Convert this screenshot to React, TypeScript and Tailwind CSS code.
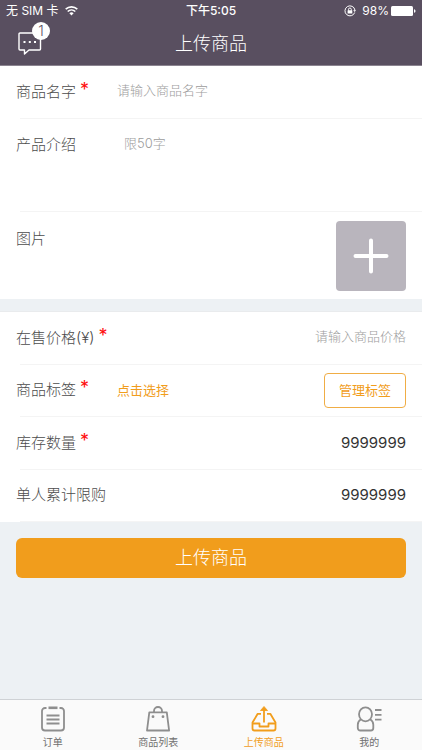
import type { ReactNode } from 'react';

function Required() {
  return <span className="ml-1 text-lg leading-4 font-normal text-[#ff0d0d]" aria-hidden="true">*</span>;
}

function Divider() {
  return <div className="ml-5 h-px bg-[#f4f4f4]" />;
}

type FieldProps = {
  label: string;
  htmlFor?: string;
  required?: boolean;
  children: ReactNode;
};

function Field({ label, htmlFor, required, children }: FieldProps) {
  return (
    <div className="flex flex-col">
      <div className="flex flex-1 items-center px-4">
        <label htmlFor={htmlFor} className="flex shrink-0 items-start text-[15px] leading-5 font-light text-[#4c4c4c]">
          {label}
          {required && <Required />}
        </label>
        {children}
      </div>
      <Divider />
    </div>
  );
}

function StatusBar() {
  return (
    <div className="grid h-5 grid-cols-3 items-center px-1.5 pt-0.5 text-xs leading-4">
      <div className="flex items-center gap-1.5">
        <span>无 SIM 卡</span>
        <svg width="13" height="10" viewBox="0 0 13 10" fill="none" stroke="currentColor" strokeWidth="1.6">
          <path d="M.7 3.2a8.5 8.5 0 0 1 11.6 0M2.7 5.5a5.6 5.6 0 0 1 7.6 0" />
          <path d="M6.5 9.5 4.4 7.3a3 3 0 0 1 4.2 0z" fill="currentColor" stroke="none" />
        </svg>
      </div>
      <span className="text-center font-medium">下午5:05</span>
      <div className="flex items-center justify-end gap-0.5">
        <svg className="mr-1" width="12" height="12" viewBox="0 0 12 12" fill="none" stroke="currentColor">
          <path d="M10.7 7.5A5 5 0 1 1 10.9 5" />
          <path d="m9.2 5.2 1.5 1.7 1.3-1.8z" fill="currentColor" stroke="none" />
          <path d="M4.5 5.6V4.4a1.4 1.4 0 0 1 2.8 0v1.2" />
          <rect x="3.6" y="5.3" width="4.7" height="3.3" rx=".4" fill="currentColor" stroke="none" />
        </svg>
        <span>98%</span>
        <svg width="25" height="10" viewBox="0 0 25 10" fill="currentColor">
          <rect width="22" height="10" rx="1.5" />
          <path d="M23 3.2c2 .5 2 3.1 0 3.6z" />
        </svg>
      </div>
    </div>
  );
}

function OrderIcon() {
  return (
    <svg width="26" height="26" viewBox="0 0 26 26" fill="none" stroke="currentColor" strokeWidth="1.8">
      <path d="M6.5 2H5a3 3 0 0 0-3 3v16.5a3 3 0 0 0 3 3h16a3 3 0 0 0 3-3V5a3 3 0 0 0-3-3h-1.5" />
      <path d="M8.5 1.8h9" strokeWidth="2.6" />
      <path d="M6.5 9.5h13M6.5 13.5h13M6.5 17.5h13" />
    </svg>
  );
}

function BagIcon() {
  return (
    <svg width="26" height="26" viewBox="0 0 26 26" fill="none" stroke="currentColor" strokeWidth="1.8">
      <path d="M4.3 6.3h17.5l2.3 18.2H2z" strokeLinejoin="round" />
      <path d="M9 6V5a4 4 0 0 1 8 0v1" />
      <circle cx="8" cy="10.7" r="1.4" fill="currentColor" stroke="none" />
      <circle cx="18" cy="10.7" r="1.4" fill="currentColor" stroke="none" />
    </svg>
  );
}

function UploadIcon() {
  return (
    <svg width="26" height="26" viewBox="0 0 26 26" fill="none" stroke="currentColor" strokeWidth="1.8" strokeLinejoin="round">
      <path d="M10 7.8H6.7L1.5 16.5v6a2 2 0 0 0 2 2h19a2 2 0 0 0 2-2v-6L19.3 7.8H16" />
      <path d="M1.5 17.5h7v3h9v-3h7" />
      <path d="M13 16.5V3" />
      <path d="m13 .5 3.5 4h-7z" fill="currentColor" strokeWidth=".8" />
    </svg>
  );
}

function ProfileIcon() {
  return (
    <svg width="26" height="26" viewBox="0 0 26 26" fill="none" stroke="currentColor" strokeWidth="1.8">
      <ellipse cx="9.5" cy="8.3" rx="6.5" ry="7" />
      <path d="M5 13.3c-2 1.2-3.2 3-3.2 5.5V22a2.5 2.5 0 0 0 2.5 2.5h10.5a2.5 2.5 0 0 0 2.5-2.5v-3.2c0-2.5-1.2-4.3-3.2-5.5" />
      <path d="M19 4h6.5M19 8.8h6.5M19 13.7h6.5" />
    </svg>
  );
}

const tabs = [
  { label: '订单', icon: <OrderIcon />, active: false },
  { label: '商品列表', icon: <BagIcon />, active: false },
  { label: '上传商品', icon: <UploadIcon />, active: true },
  { label: '我的', icon: <ProfileIcon />, active: false },
];

export default function App() {
  return (
    <div className="flex min-h-screen flex-col bg-[#edf1f4] font-['Inter','Noto_Sans_CJK_SC',sans-serif]">
      <header className="border-b border-[#8b8490] bg-[#594f60] text-white">
        <StatusBar />
        <div className="grid h-[45px] grid-cols-[1fr_auto_1fr] items-center px-4 pt-0.5">
          <button type="button" aria-label="消息" className="relative ml-0.5 w-7 justify-self-start">
            <svg width="24" height="23" viewBox="0 0 24 23" fill="none" stroke="currentColor" strokeWidth="1.4" strokeLinejoin="round">
              <path d="M2 1h19.5a1 1 0 0 1 1 1v15a1 1 0 0 1-1 1H11l-4.5 4v-4H2a1 1 0 0 1-1-1V2a1 1 0 0 1 1-1z" />
              <path d="M5.5 10h2M10.8 10h2M16 10h2" strokeWidth="1.8" />
            </svg>
            <span className="absolute -top-2.5 left-3.5 size-[18px] rounded-full bg-white text-center text-sm leading-[18px] font-light text-[#594f60]">
              1
            </span>
          </button>
          <h1 className="text-lg leading-6 font-light">上传商品</h1>
        </div>
      </header>

      <main className="flex-1">
        <form>
          <section className="bg-white">
            <div className="grid h-[53px]">
              <Field label="商品名字" htmlFor="name" required>
                <input
                  id="name"
                  placeholder="请输入商品名字"
                  className="ml-7 min-w-0 flex-1 pb-1 text-[13px] leading-5 font-light outline-none placeholder:text-[#9c9c9c]"
                />
              </Field>
            </div>
            <div className="flex h-[92px] items-start px-4 pt-4">
              <label htmlFor="intro" className="text-[15px] leading-5 font-light text-[#4c4c4c]">
                产品介绍
              </label>
              <textarea
                id="intro"
                placeholder="限50字"
                className="ml-12 h-16 min-w-0 flex-1 resize-none text-[13px] leading-4 font-light outline-none placeholder:text-[#9c9c9c]"
              />
            </div>
            <Divider />
            <div className="flex items-start justify-between px-4 pt-[9px] pb-2">
              <span className="mt-2 text-[15px] leading-5 font-light text-[#4c4c4c]">图片</span>
              <button
                type="button"
                aria-label="添加图片"
                className="flex size-[70px] items-center justify-center rounded-sm bg-[#b9b5bd] text-white"
              >
                <svg width="36" height="36" viewBox="0 0 36 36" stroke="currentColor" strokeWidth="4" strokeLinecap="round">
                  <path d="M18 2.5v31M2.5 18h31" />
                </svg>
              </button>
            </div>
          </section>

          <section className="mt-3 grid h-[211px] grid-rows-4 border-t border-[#e9ebed] bg-white">
            <Field label="在售价格(¥)" htmlFor="price" required>
              <input
                id="price"
                placeholder="请输入商品价格"
                className="min-w-0 flex-1 pb-1 text-right text-[13px] leading-5 font-light outline-none placeholder:text-[#9c9c9c]"
              />
            </Field>
            <Field label="商品标签" required>
              <button type="button" className="ml-7 text-[13px] leading-5 text-[#f19d1c]">
                点击选择
              </button>
              <button
                type="button"
                className="ml-auto h-[35px] w-[82px] rounded-sm border border-[#f0ad45] text-[13px] leading-5 text-[#f19d1c]"
              >
                管理标签
              </button>
            </Field>
            <Field label="库存数量" htmlFor="stock" required>
              <input
                id="stock"
                defaultValue="9999999"
                className="min-w-0 flex-1 text-right text-[15px] leading-5 text-[#333333] outline-none"
              />
            </Field>
            <Field label="单人累计限购" htmlFor="limit">
              <input
                id="limit"
                defaultValue="9999999"
                className="min-w-0 flex-1 text-right text-[15px] leading-5 text-[#333333] outline-none"
              />
            </Field>
          </section>

          <div className="px-4 pt-4">
            <button type="button" className="h-10 w-full rounded-md bg-[#f19d1c] text-lg leading-6 font-light text-white">
              上传商品
            </button>
          </div>
        </form>
      </main>

      <nav className="grid h-[51px] grid-cols-4 border-t border-[#cfd2d5] bg-[#fafafa]">
        {tabs.map((tab) => (
          <a
            key={tab.label}
            href="#"
            aria-current={tab.active ? 'page' : undefined}
            className={`flex flex-col items-center pt-1.5 text-[10px] leading-3 ${tab.active ? 'text-[#f19d1c]' : 'text-[#6f6f6f]'}`}
          >
            <span className={tab.active ? 'text-[#f19d1c]' : 'text-[#8e8e8e]'}>{tab.icon}</span>
            <span className="mt-1">{tab.label}</span>
          </a>
        ))}
      </nav>
    </div>
  );
}
